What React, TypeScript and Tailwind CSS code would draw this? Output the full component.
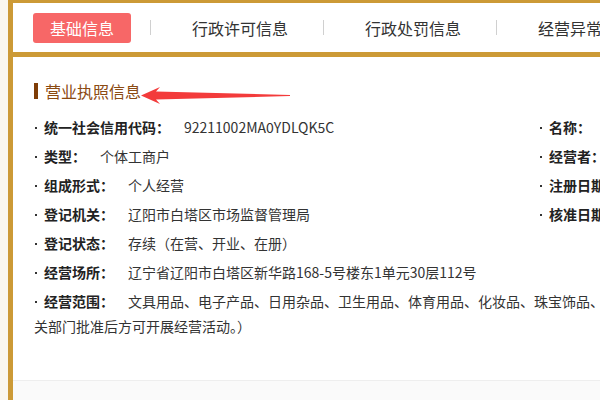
const gold = 'border-[#cc9a36]'

const tabs = ['行政许可信息', '行政处罚信息', '经营异常信息']

interface Row {
  label: string
  value: string
  right?: { label: string; value: string }
}

const rows: Row[] = [
  { label: '统一社会信用代码：', value: '92211002MA0YDLQK5C', right: { label: '名称：', value: '辽阳市白塔区文具用品店' } },
  { label: '类型：', value: '个体工商户', right: { label: '经营者：', value: '王丽' } },
  { label: '组成形式：', value: '个人经营', right: { label: '注册日期：', value: '2019年04月12日' } },
  { label: '登记机关：', value: '辽阳市白塔区市场监督管理局', right: { label: '核准日期：', value: '2019年04月12日' } },
  { label: '登记状态：', value: '存续（在营、开业、在册）' },
  { label: '经营场所：', value: '辽宁省辽阳市白塔区新华路168-5号楼东1单元30层112号' },
]

function Dot() {
  return <span className="mb-[3px] ml-px mr-[7px] inline-block h-[2px] w-[2px] bg-[#333] align-middle" />
}

function Item({ label, value }: { label: string; value: string }) {
  return (
    <div className="whitespace-nowrap">
      <Dot />
      <span className="font-bold text-[#222]">{label}</span>
      <span className="ml-[14px] text-[#333]">{value}</span>
    </div>
  )
}

export default function App() {
  return (
    <div
      className="h-[400px] w-[600px] overflow-hidden bg-[#faf7ee] pl-[8px]"
      style={{ fontFamily: '"Noto Sans CJK SC", "Noto Sans", sans-serif' }}
    >
      <div className={`flex h-full w-[1100px] flex-col border-l-[5px] border-t-[3px] ${gold} bg-white`}>
        <div className={`flex h-[54px] shrink-0 items-center border-b-[5px] ${gold} pl-[20px] text-[16px] text-[#333]`}>
          <span className="mr-[19px] flex h-[30px] w-[98px] items-center justify-center rounded-[3px] bg-[#f76767] text-white">
            基础信息
          </span>
          {tabs.map((tab) => (
            <div key={tab} className="flex items-center">
              <span className="h-[15px] w-px bg-[#d0d0d0]" />
              <span className="ml-[41px] mr-[35px] w-[96px] whitespace-nowrap leading-[20px]">{tab}</span>
            </div>
          ))}
        </div>

        <div className="relative flex-1 px-[21px] pt-[24px]">
          <div className="flex h-[20px] items-center">
            <span className="h-[16px] w-[4px] bg-[#7f3d07]" />
            <span className="ml-[7px] text-[16px] leading-[20px] text-[#8b4a12]">营业执照信息</span>
          </div>
          <svg className="absolute left-[128px] top-[29px]" width="150" height="19" viewBox="0 0 150 19">
            <polygon points="0,9.5 19,1 15,5.5 149,9 149,10 15,13.5 19,18" fill="#f33b3b" />
          </svg>

          <div className="mt-[14px] flex flex-col gap-[4px] text-[14px] leading-[25px]">
            {rows.map((row) => (
              <div key={row.label} className="grid grid-cols-[505px_1fr]">
                <Item label={row.label} value={row.value} />
                {row.right ? <Item label={row.right.label} value={row.right.value} /> : <div />}
              </div>
            ))}
            <div className="w-[1000px]">
              <Dot />
              <span className="font-bold text-[#222]">经营范围：</span>
              <span className="ml-[14px] text-[#333]">
                文具用品、电子产品、日用杂品、卫生用品、体育用品、化妆品、珠宝饰品、工艺品、服装鞋帽零售。（依法须经批准的项目，经相
                <br />
                关部门批准后方可开展经营活动。）
              </span>
            </div>
          </div>
        </div>

        <div className="h-[20px] shrink-0 border-t border-[#eeeeee] bg-[#fafafa]" />
      </div>
    </div>
  )
}
